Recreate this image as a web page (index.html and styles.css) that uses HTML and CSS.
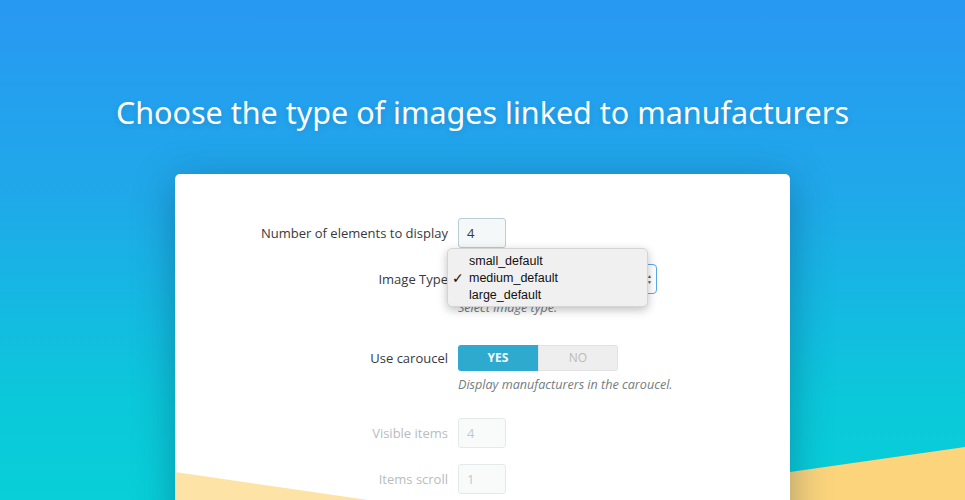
FILE: index.html
```html
<!DOCTYPE html>
<html>
<head>
<meta charset="utf-8">
<link rel="stylesheet" href="styles.css">
</head>
<body>
<div class="hero">
  <svg class="wave-right" width="965" height="500" viewBox="0 0 965 500"><polygon points="600,499 965,447 965,500 600,500" fill="#fbd47c"/></svg>
  <h1 class="title">Choose the type of images linked to manufacturers</h1>
  <div class="card">
    <div class="wave-left"></div>
    <div class="group">
      <label class="label">Number of elements to display</label>
      <div class="input">4</div>
    </div>
    <div class="group">
      <label class="label">Image Type</label>
      <div class="select"><span class="sel-text"></span><span class="arrows">&#9650;<br>&#9660;</span></div>
      <div class="help">Select image type.</div>
    </div>
    <div class="group g3">
      <label class="label">Use caroucel</label>
      <div class="switch"><span class="yes">YES</span><span class="no">NO</span></div>
      <div class="help">Display manufacturers in the caroucel.</div>
    </div>
    <div class="group g4 disabled">
      <label class="label">Visible items</label>
      <div class="input">4</div>
    </div>
    <div class="group disabled">
      <label class="label">Items scroll</label>
      <div class="input">1</div>
    </div>
    <div class="dropdown">
      <div class="opt">small_default</div>
      <div class="opt"><span class="check">✓</span>medium_default</div>
      <div class="opt">large_default</div>
    </div>
  </div>
</div>
</body>
</html>
```
FILE: styles.css
```css
html, body { margin: 0; padding: 0; }
body { font-family: "Open Sans", sans-serif; }
.hero {
  position: relative;
  width: 965px;
  height: 500px;
  overflow: hidden;
  background: linear-gradient(180deg, #2898f3 0%, #1fa9e9 40%, #0bc8da 80%, #08cfd8 100%);
}
.wave-right { position: absolute; left: 0; top: 0; }
.title {
  position: relative;
  margin: 0;
  padding-top: 92px;
  height: 82px;
  text-align: center;
  color: #fff;
  font-family: "Noto Sans", sans-serif;
  font-weight: 400;
  font-size: 30.5px;
  line-height: 40px;
  text-shadow: 0 2px 6px rgba(0,0,0,0.12);
}
.card {
  position: relative;
  width: 615px;
  margin: 0 auto;
  background: #fff;
  border-radius: 5px;
  box-shadow: 0 8px 40px rgba(0, 40, 80, 0.35);
  padding: 44px 0 40px;
  overflow: hidden;
  box-sizing: border-box;
}
.wave-left {
  position: absolute;
  left: 0;
  top: 298px;
  width: 400px;
  height: 120px;
  background: #fde3a6;
  clip-path: polygon(0 0, 400px 58px, 400px 120px, 0 120px);
}
.group {
  display: grid;
  grid-template-columns: 273px 1fr;
  column-gap: 10px;
  align-items: center;
  margin-bottom: 16px;
  position: relative;
}
.g3 { margin-top: 28px; margin-bottom: 24px; }
.label {
  text-align: right;
  font-size: 13px;
  color: #363a41;
  grid-column: 1;
  grid-row: 1;
}
.input {
  width: 48px;
  height: 30px;
  box-sizing: border-box;
  border: 1px solid #bbcdd2;
  border-radius: 3px;
  background: #f5f8f9;
  font-size: 13px;
  color: #363a41;
  line-height: 28px;
  padding-left: 8px;
}
.disabled .label { color: #b8bcbf; }
.disabled .input { border-color: #e3eaec; background: #f9fbfb; color: #c4c9cc; }
.select {
  width: 199px;
  height: 30px;
  box-sizing: border-box;
  border: 1px solid #5aa9ea;
  border-radius: 4px;
  background: #fff;
  display: flex;
  align-items: center;
  justify-content: space-between;
  font-size: 13px;
  color: #363a41;
  padding: 0 4px 0 8px;
}
.arrows {
  font-size: 5px;
  line-height: 6px;
  color: #555;
  text-align: center;
}
.help {
  grid-column: 2;
  grid-row: 2;
  margin-top: 5px;
  font-size: 12.6px;
  line-height: 18px;
  font-style: italic;
  color: #737d82;
}
.switch {
  display: flex;
  width: 160px;
  height: 26px;
  border-radius: 3px;
  overflow: hidden;
  font-size: 12px;
  font-weight: 700;
  line-height: 26px;
  text-align: center;
}
.yes { flex: 1; background: #2eaacf; color: #fff; }
.no { flex: 1; background: #eeeeee; color: #bbbbbb; font-weight: 400; box-shadow: inset 0 0 0 1px #e2e2e2; }
.dropdown {
  position: absolute;
  left: 272px;
  top: 74px;
  width: 201px;
  height: 59px;
  box-sizing: border-box;
  padding-top: 4px;
  background: #f0f0f0;
  border: 1px solid #d4d4d4;
  border-radius: 5px;
  box-shadow: 0 3px 10px rgba(0,0,0,0.25);
  font-family: "Liberation Sans", Arial, sans-serif;
  font-size: 12.5px;
  color: #111;
}
.opt {
  position: relative;
  height: 17px;
  line-height: 17px;
  padding-left: 21px;
}
.check { position: absolute; left: 4px; top: 0; font-family: "DejaVu Sans", sans-serif; font-size: 14px; font-weight: 700; }
```
